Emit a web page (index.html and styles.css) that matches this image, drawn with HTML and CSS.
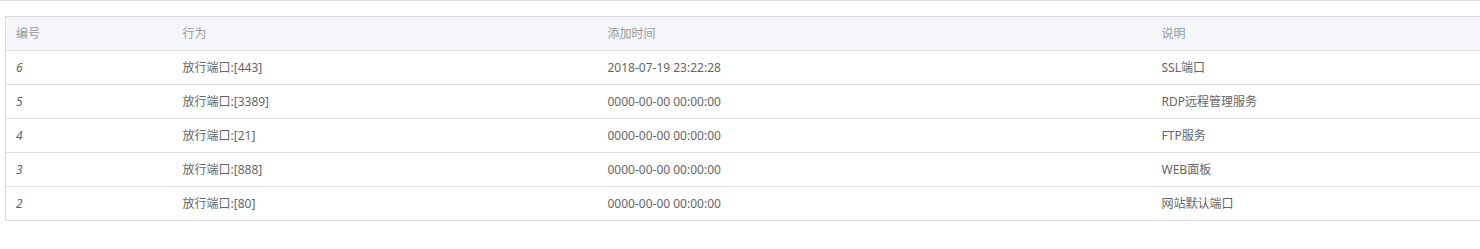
FILE: index.html
```html
<!DOCTYPE html>
<html lang="zh-CN">
<head>
<meta charset="utf-8">
<title>放行端口</title>
<link rel="stylesheet" href="styles.css">
</head>
<body>
<div class="topline"></div>
<div class="wrap">
  <table class="grid">
    <colgroup>
      <col class="c-id">
      <col class="c-act">
      <col class="c-time">
      <col class="c-desc">
    </colgroup>
    <thead>
      <tr><th>编号</th><th>行为</th><th>添加时间</th><th>说明</th></tr>
    </thead>
    <tbody>
      <tr><td class="id">6</td><td>放行端口:[443]</td><td>2018-07-19 23:22:28</td><td>SSL端口</td></tr>
      <tr><td class="id">5</td><td>放行端口:[3389]</td><td>0000-00-00 00:00:00</td><td>RDP远程管理服务</td></tr>
      <tr><td class="id">4</td><td>放行端口:[21]</td><td>0000-00-00 00:00:00</td><td>FTP服务</td></tr>
      <tr><td class="id">3</td><td>放行端口:[888]</td><td>0000-00-00 00:00:00</td><td>WEB面板</td></tr>
      <tr><td class="id">2</td><td>放行端口:[80]</td><td>0000-00-00 00:00:00</td><td>网站默认端口</td></tr>
    </tbody>
  </table>
</div>
</body>
</html>
```

FILE: styles.css
```css
html, body {
  margin: 0;
  padding: 0;
  background: #fff;
  overflow: hidden;
}
body {
  font-family: "Noto Sans", "Noto Sans CJK SC", sans-serif;
  font-size: 12px;
  color: #666;
}
.topline {
  border-top: 1px solid #ddd;
  height: 0;
}
.wrap {
  padding: 15px 0 0 5px;
}
.grid {
  width: 1490px;
  border-collapse: collapse;
  table-layout: fixed;
  border-left: 1px solid #ddd;
  border-top: 1px solid #ddd;
}
.c-id { width: 167px; }
.c-act { width: 425px; }
.c-time { width: 554px; }
.grid th,
.grid td {
  height: 33px;
  padding: 0 0 0 10px;
  text-align: left;
  font-weight: normal;
  border-bottom: 1px solid #ddd;
  line-height: 16px;
  box-sizing: border-box;
  white-space: nowrap;
}
.grid th {
  background: #f5f6fa;
  color: #999;
  height: 34px;
}
.grid td {
  height: 34px;
}
.grid td.id {
  font-style: italic;
}
```
